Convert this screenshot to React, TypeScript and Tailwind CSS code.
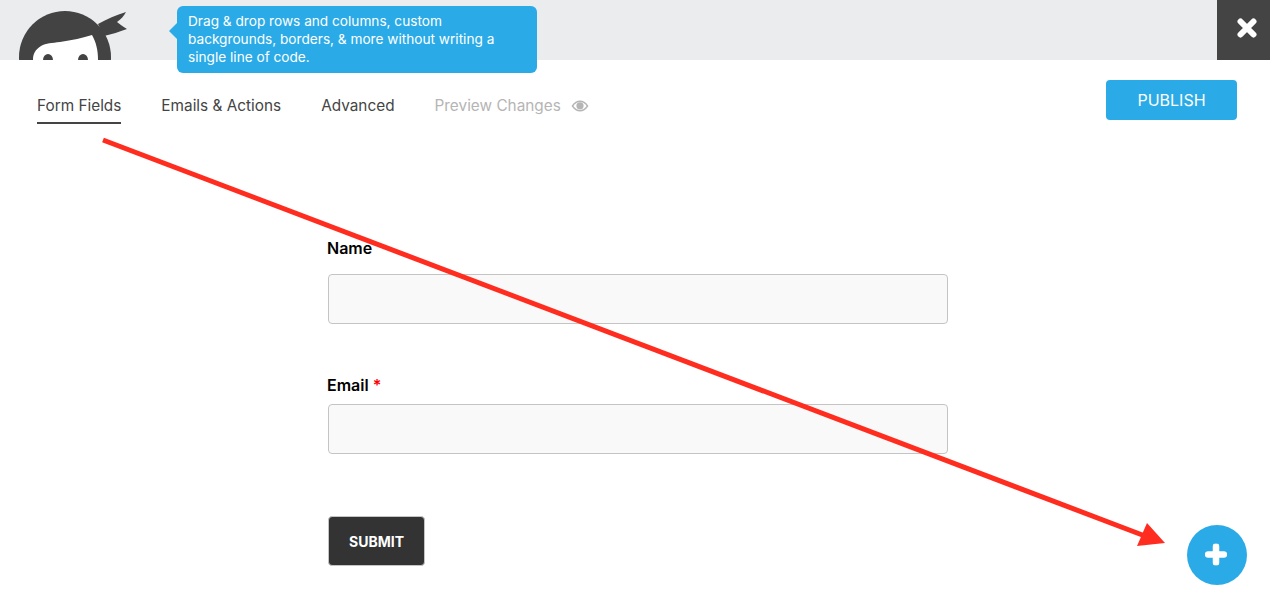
const blue = "bg-[#2aabe8]";

function NinjaLogo() {
  return (
    <svg width="130" height="60" viewBox="0 0 130 60" className="block">
      <circle cx="65" cy="57" r="46" fill="#434343" />
      <path d="M98 24 C107 19 116 15 126 12 C124 16 121 19 117 22 C120 24 123 27 127 29 C119 32 112 34 104 36 Z" fill="#434343" />
      <path d="M33 60 C33 54 35 50 41 46 C46 43 52 43 60 42 C72 40 83 38 92 35 C96 42 98 50 98 60 Z" fill="#ffffff" />
      <ellipse cx="48" cy="60" rx="5" ry="6" fill="#434343" />
      <ellipse cx="83" cy="60" rx="5" ry="6" fill="#434343" />
    </svg>
  );
}

function Field({ label, required, className, inputGap }: { label: string; required?: boolean; className: string; inputGap: string }) {
  return (
    <div className={className}>
      <div className="text-[16px] leading-[20px] font-semibold text-black -ml-px">
        {label}
        {required && <span className="text-[#ff0000]"> *</span>}
      </div>
      <div className={`${inputGap} h-[50px] w-[620px] rounded-[4px] border border-[#c4c4c4] bg-[#f9f9f9]`} />
    </div>
  );
}

export default function App() {
  return (
    <div className="relative h-[603px] w-[1270px] overflow-hidden bg-white font-['Inter',sans-serif]">
      <header className="flex h-[60px] items-start justify-between overflow-hidden bg-[#ebecee]">
        <NinjaLogo />
        <button className="h-[60px] w-[53px] bg-[#444444] pb-[4px] pl-[1px]">
          <svg width="20" height="20" viewBox="0 0 20 20" className="mx-auto block translate-x-[3px]">
            <path d="M3.5 3.5 L16.5 16.5 M16.5 3.5 L3.5 16.5" stroke="#ffffff" strokeWidth="6" strokeLinecap="round" />
          </svg>
        </button>
      </header>

      <div className={`absolute left-[177px] top-[6px] h-[67px] w-[360px] rounded-[6px] ${blue} px-[11px] py-[6px] text-[13.65px] leading-[18px] text-white`}>
        <span className="absolute left-[-8px] top-[17px] h-0 w-0 border-y-[8px] border-r-[8px] border-y-transparent border-r-[#2aabe8]" />
        Drag &amp; drop rows and columns, custom backgrounds, borders, &amp; more without writing a single line of code.
      </div>

      <nav className="flex h-[84px] items-start justify-between pl-[37px] pr-[33px] pt-[20px]">
        <div className="flex items-start gap-[40px] pt-[16px] text-[15.35px] leading-[20px] text-[#444444]">
          <a className="h-[28px] border-b-2 border-[#444444]">Form Fields</a>
          <a>Emails &amp; Actions</a>
          <a>Advanced</a>
          <a className="flex items-center gap-[10px] text-[#b5b5b5]">
            Preview Changes
            <svg width="18" height="12" viewBox="0 0 18 12">
              <path d="M0.5 6 C3 2 6 0.5 9 0.5 C12 0.5 15 2 17.5 6 C15 10 12 11.5 9 11.5 C6 11.5 3 10 0.5 6 Z" fill="#b5b5b5" />
              <path d="M2.4 6 C4.3 3.3 6.5 2 9 2 C11.5 2 13.7 3.3 15.6 6 C13.7 8.7 11.5 10 9 10 C6.5 10 4.3 8.7 2.4 6 Z" fill="#ffffff" />
              <circle cx="9" cy="5.8" r="3.6" fill="#b5b5b5" />
            </svg>
          </a>
        </div>
        <button className={`h-[40px] w-[131px] rounded-[4px] ${blue} text-[16px] font-normal text-white`}>PUBLISH</button>
      </nav>

      <main className="pl-[328px]">
        <Field label="Name" inputGap="mt-[16px]" className="pt-[94px]" />
        <Field label="Email" required inputGap="mt-[9px]" className="pt-[51px]" />
        <button className="mt-[62px] h-[50px] w-[97px] rounded-[4px] border border-[#c4c4c4] bg-[#333333] text-[14px] font-bold text-white">
          SUBMIT
        </button>
      </main>

      <button className={`absolute left-[1187px] top-[525px] flex h-[60px] w-[60px] items-center justify-center rounded-full ${blue}`}>
        <svg width="22" height="22" viewBox="1 0.5 22 22" className="-translate-x-[1px] -translate-y-[0.5px]">
          <path d="M12 3.5 V19.5 M4 11.5 H20" stroke="#ffffff" strokeWidth="6.5" strokeLinecap="round" />
        </svg>
      </button>

      <svg className="pointer-events-none absolute left-0 top-0" width="1270" height="603" viewBox="0 0 1270 603">
        <path d="M103 140 L1145 536" stroke="#ff2d1f" strokeWidth="5" fill="none" />
        <path d="M1165 543 L1137 546 L1147 523 Z" fill="#ff2d1f" />
      </svg>
    </div>
  );
}
